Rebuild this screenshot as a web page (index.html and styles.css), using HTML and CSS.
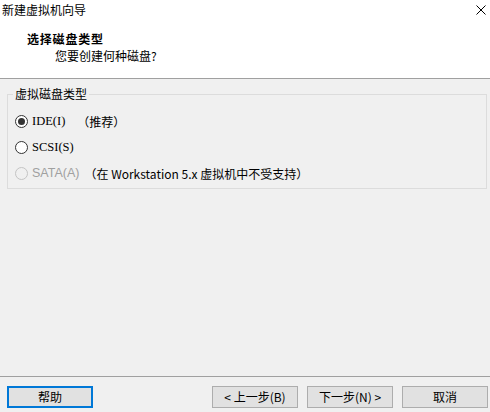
FILE: index.html
```html
<!DOCTYPE html>
<html lang="zh-CN">
<head>
<meta charset="utf-8">
<title>新建虚拟机向导</title>
<link rel="stylesheet" href="styles.css">
</head>
<body>
<div class="window">
  <div class="titlebar">
    <span class="title">新建虚拟机向导</span>
    <svg class="close" width="10" height="10" viewBox="0 0 10 10"><path d="M0.5 0.5 L9.5 9.5 M9.5 0.5 L0.5 9.5" stroke="#000" stroke-width="1" fill="none"/></svg>
  </div>
  <div class="header">
    <div class="heading">选择磁盘类型</div>
    <div class="subheading">您要创建何种磁盘?</div>
  </div>
  <div class="main">
    <fieldset class="group">
      <legend class="legend">虚拟磁盘类型</legend>
      <label class="row">
        <span class="radio checked"></span>
        <span class="opt serif">IDE(I)</span>
        <span class="note">（推荐）</span>
      </label>
      <label class="row">
        <span class="radio"></span>
        <span class="opt serif">SCSI(S)</span>
      </label>
      <label class="row">
        <span class="radio disabled"></span>
        <span class="opt sans dis">SATA(A)</span>
        <span class="note2">（在 Workstation 5.x 虚拟机中不受支持）</span>
      </label>
    </fieldset>
  </div>
  <div class="footer">
    <button class="btn default">帮助</button>
    <div class="spacer"></div>
    <button class="btn">&lt; 上一步(B)</button>
    <button class="btn">下一步(N) &gt;</button>
    <button class="btn">取消</button>
  </div>
</div>
</body>
</html>
```
FILE: styles.css
```css
html, body {
  margin: 0;
  padding: 0;
}
body {
  width: 490px;
  height: 412px;
  overflow: hidden;
  background: #f0f0f0;
  font-family: "Noto Sans CJK SC", "Microsoft YaHei", sans-serif;
  font-size: 12px;
  color: #000;
}
.window {
  display: flex;
  flex-direction: column;
  width: 490px;
  height: 412px;
}
.titlebar {
  height: 20px;
  background: #fff;
  display: flex;
  align-items: center;
  justify-content: space-between;
  padding: 0 4px 0 2px;
}
.title {
  line-height: 20px;
}
.close {
  display: block;
  margin-top: -1px;
}
.header {
  height: 59px;
  background: #fff;
  border-bottom: 1px solid #a0a0a0;
  padding-top: 11px;
  box-sizing: border-box;
}
.heading {
  padding-left: 27px;
  font-weight: bold;
  letter-spacing: 0.8px;
  line-height: 16px;
}
.subheading {
  padding-left: 55px;
  margin-top: 1px;
  line-height: 16px;
}
.main {
  flex: 1;
  padding-top: 7px;
}
.group {
  margin: 0 3px 0 7px;
  padding: 6px 0 2px 5px;
  border: 1px solid #dcdcdc;
  min-width: 0;
}
.legend {
  padding: 0 2px;
  line-height: 16px;
}
.row {
  display: flex;
  align-items: center;
  height: 26px;
  padding-left: 2px;
}
.radio {
  width: 13px;
  height: 13px;
  box-sizing: border-box;
  border: 1px solid #333;
  border-radius: 50%;
  background: #fff;
  display: flex;
  align-items: center;
  justify-content: center;
  margin-right: 4px;
}
.radio.checked::after {
  content: "";
  width: 7px;
  height: 7px;
  border-radius: 50%;
  background: #333;
}
.radio.disabled {
  border-color: #c4c4c4;
  background: #f0f0f0;
}
.serif {
  font-family: "Liberation Serif", "Noto Sans CJK SC", serif;
  font-size: 12.5px;
  color: #000;
}
.sans {
  font-family: "Liberation Sans", "Noto Sans CJK SC", sans-serif;
  font-size: 12.5px;
}
.dis {
  color: #a0a0a0;
}
.note {
  margin-left: 12px;
}
.note2 {
  margin-left: 5px;
}
.footer {
  height: 36px;
  border-top: 1px solid #a0a0a0;
  box-sizing: border-box;
  display: flex;
  align-items: flex-start;
  padding: 9px 2px 0 7px;
  gap: 9px;
}
.spacer {
  flex: 1;
}
.btn {
  width: 86px;
  height: 22px;
  box-sizing: border-box;
  border: 1px solid #adadad;
  background: #e1e1e1;
  font-family: "Noto Sans CJK SC", "Microsoft YaHei", sans-serif;
  font-size: 12px;
  color: #000;
  padding: 0;
  margin: 0;
  line-height: 18px;
}
.btn.default {
  border: 2px solid #0078d7;
}
```
